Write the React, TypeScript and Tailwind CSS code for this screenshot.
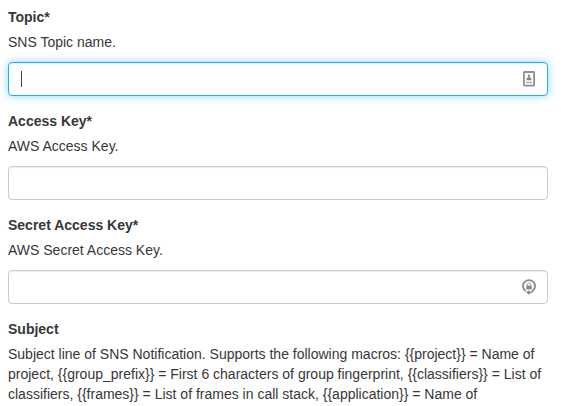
import type { ReactNode } from "react";

function ContactIcon() {
  return (
    <svg width="12" height="16" viewBox="0 0 12 16" className="mr-3 shrink-0" fill="none">
      <rect x="0.900" y="1" width="10.200" height="13.600" rx="0.5" stroke="#909090" strokeWidth="1.800" />
      <path d="M6 3.500v3" stroke="#8f8f8f" strokeWidth="1.800" />
      <path d="M3.500 9.200V8l1.300-1.800h2.400L8.500 8v1.200z" fill="#858585" />
      <path d="M3 11.500h6" stroke="#a8a8a8" strokeWidth="1.400" />
    </svg>
  );
}

function GenerateIcon() {
  return (
    <svg width="14" height="17" viewBox="0 0 14 17" className="mr-[11px] shrink-0" fill="none">
      <path d="M3.800 12.200A6 6 0 1 1 10.200 12.200" stroke="#909090" strokeWidth="1.900" />
      <path d="M5.300 7V5.600a1.700 1.700 0 0 1 3.400 0V7" stroke="#a0a0a0" strokeWidth="1" />
      <rect x="4.300" y="6.600" width="5.400" height="3.800" fill="#888" />
      <path d="M10.600 12.200L9 13.500H6.500" stroke="#8b8b8b" strokeWidth="1.700" />
      <path d="M7.500 11v5L4 13.500z" fill="#858585" />
    </svg>
  );
}

function Field({
  label,
  help,
  focused = false,
  icon,
}: {
  label: string;
  help: string;
  focused?: boolean;
  icon?: ReactNode;
}) {
  return (
    <div className="mb-[15px]">
      <div className="mb-[5px] font-bold">{label}</div>
      <p className="mb-2.5">{help}</p>
      <div
        className={
          focused
            ? "flex h-[34px] items-center justify-between rounded border border-[#1fb0e8] bg-white pl-3 shadow-[inset_0_1px_1px_rgba(0,0,0,0.075),0_0_8px_rgba(31,176,232,0.5)]"
            : "flex h-[34px] items-center justify-between rounded border border-[#ccc] bg-white pl-3 shadow-[inset_0_1px_1px_rgba(0,0,0,0.075)]"
        }
      >
        <span className={focused ? "h-4 w-px bg-[#444]" : "h-4 w-px"} />
        {icon}
      </div>
    </div>
  );
}

export default function App() {
  return (
    <main className="h-[406px] w-[561px] overflow-hidden bg-white pt-[7px] pl-2 font-['Liberation_Sans',Arial,sans-serif] text-[14px] leading-5 text-[#373737]">
      <div className="w-[540px]">
        <Field label="Topic*" help="SNS Topic name." focused icon={<ContactIcon />} />
        <Field label="Access Key*" help="AWS Access Key." />
        <Field label="Secret Access Key*" help="AWS Secret Access Key." icon={<GenerateIcon />} />
        <div className="mb-[5px] font-bold">Subject</div>
        <p>
          Subject line of SNS Notification. Supports the following macros: {"{{project}}"} = Name of
          <br />
          project, {"{{group_prefix}}"} = First 6 characters of group fingerprint, {"{{classifiers}}"} = List of
          <br />
          classifiers, {"{{frames}}"} = List of frames in call stack, {"{{application}}"} = Name of
        </p>
      </div>
    </main>
  );
}
